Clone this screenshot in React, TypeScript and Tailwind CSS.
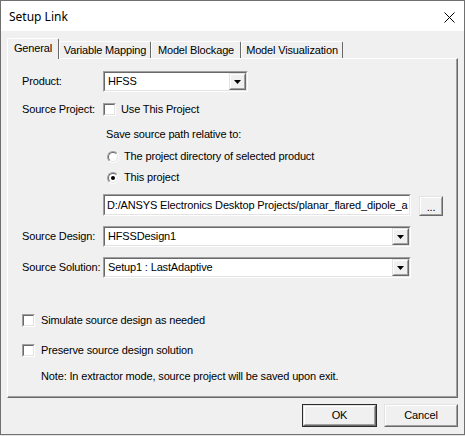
import React from "react";

// classic 3D bevels used by the Win32 controls
const sunkenOuter = "border border-t-[#a0a0a0] border-l-[#a0a0a0] border-b-white border-r-white";
const sunkenInner = "border border-t-[#696969] border-l-[#696969] border-b-[#e3e3e3] border-r-[#e3e3e3]";
const raisedOuter = "border border-t-[#e3e3e3] border-l-[#e3e3e3] border-b-[#696969] border-r-[#696969]";
const raisedInner = "border border-t-white border-l-white border-b-[#a0a0a0] border-r-[#a0a0a0]";

function Sunken({ className, children }: { className: string; children?: React.ReactNode }) {
  return (
    <div className={`${sunkenOuter} ${className}`}>
      <div className={`${sunkenInner} h-full w-full bg-white flex items-center overflow-hidden`}>{children}</div>
    </div>
  );
}

function DropButton() {
  return (
    <div className={`${raisedOuter} h-full w-[17px] shrink-0 bg-[#f0f0f0]`}>
      <div className={`${raisedInner} h-full w-full flex items-center justify-center`}>
        <svg width="7" height="4" viewBox="0 0 7 4">
          <polygon points="0,0 7,0 3.5,4" fill="#000" />
        </svg>
      </div>
    </div>
  );
}

function Combo({ value, width }: { value: string; width: string }) {
  return (
    <Sunken className={`${width} h-[21px]`}>
      <span className="flex-1 pl-[3px] whitespace-nowrap">{value}</span>
      <DropButton />
    </Sunken>
  );
}

function CheckBox() {
  return <Sunken className="w-[13px] h-[13px] shrink-0" />;
}

function Radio({ checked }: { checked?: boolean }) {
  return (
    <div className="w-[12px] h-[12px] shrink-0 rounded-full border border-t-[#a0a0a0] border-l-[#a0a0a0] border-b-white border-r-white">
      <div className="w-full h-full rounded-full border border-t-[#696969] border-l-[#696969] border-b-[#e3e3e3] border-r-[#e3e3e3] bg-white flex items-center justify-center">
        {checked && <div className="w-[4px] h-[4px] rounded-full bg-black" />}
      </div>
    </div>
  );
}

function Button({ label, primary }: { label: string; primary?: boolean }) {
  const face = (
    <div className={`${raisedOuter} h-full w-full bg-[#f0f0f0]`}>
      <div className={`${raisedInner} h-full w-full flex items-center justify-center`}>{label}</div>
    </div>
  );
  if (primary) return <div className="w-[75px] h-[23px] border border-[#2b2b2b]">{face}</div>;
  return <div className="w-[74px] h-[23px]">{face}</div>;
}

function Tab({ label, width, active }: { label: string; width: string; active?: boolean }) {
  if (active)
    return (
      <div className={`${width} h-[21px] -mb-[1px] relative z-10 bg-[#f0f0f0] rounded-tl-[2px] rounded-tr-[2px] border-t border-l border-r border-t-white border-l-white border-r-[#696969] flex items-center justify-center pb-[1px]`}>
        {label}
      </div>
    );
  return (
    <div className={`${width} h-[17px] bg-[#f0f0f0] rounded-tl-[2px] rounded-tr-[2px] border-t border-l border-r border-t-white border-l-white border-r-[#696969] flex items-center justify-center`}>
      {label}
    </div>
  );
}

export default function App() {
  return (
    <div className="w-[465px] h-[436px] bg-[#e4e4e4] font-['Liberation_Sans',Arial,sans-serif] text-[11px] tracking-[-0.15px] text-black leading-[13px]">
      <div className="w-[465px] h-[435px] border border-[#707070] bg-[#f0f0f0] flex flex-col">
        {/* title bar */}
        <div className="h-[30px] bg-white flex items-center justify-between pl-[8px] pr-[9px]">
          <span className="font-['Noto_Sans',sans-serif] text-[12px] tracking-normal leading-[16px] pt-[1px]">Setup Link</span>
          <svg width="11" height="11" viewBox="0 0 11 11" className="mt-[2px]">
            <path d="M0.5 0.5 L10.5 10.5 M10.5 0.5 L0.5 10.5" stroke="#000" strokeWidth="1" />
          </svg>
        </div>

        <div className="px-[6px]">
          {/* tab strip */}
          <div className="mt-[7px] h-[20px] flex items-end relative z-10">
            <Tab label="General" width="w-[52px]" active />
            <Tab label="Variable Mapping" width="w-[92px]" />
            <Tab label="Model Blockage" width="w-[90px]" />
            <Tab label="Model Visualization" width="w-[102px]" />
          </div>

          {/* tab page */}
          <div className="h-[340px] border-t border-l border-b border-r border-t-white border-l-white border-b-[#696969] border-r-[#696969]">
            <div className="h-full border-b border-r border-b-[#a0a0a0] border-r-[#a0a0a0] pl-[14px] flex flex-col">
              <div className="mt-[12px] h-[21px] flex items-center">
                <span className="w-[81px]">Product:</span>
                <Combo value="HFSS" width="w-[145px]" />
              </div>

              <div className="mt-[11px] h-[13px] flex items-center">
                <span className="w-[81px]">Source Project:</span>
                <CheckBox />
                <span className="ml-[5px]">Use This Project</span>
              </div>

              <div className="mt-[12px] h-[13px] flex items-center pl-[84px]">Save source path relative to:</div>

              <div className="mt-[9px] h-[13px] flex items-center pl-[85px]">
                <Radio />
                <span className="ml-[5px]">The project directory of selected product</span>
              </div>

              <div className="mt-[8px] h-[13px] flex items-center pl-[85px]">
                <Radio checked />
                <span className="ml-[5px]">This project</span>
              </div>

              <div className="mt-[10px] h-[22px] flex items-center">
                <span className="w-[81px]" />
                <Sunken className="w-[308px] h-[22px]">
                  <span className="pl-[2px] whitespace-nowrap">D:/ANSYS Electronics Desktop Projects/planar_flared_dipole_a</span>
                </Sunken>
                <div className="ml-[8px] w-[24px] h-[20px] mt-[1px]">
                  <div className={`${raisedOuter} h-full w-full`}>
                    <div className={`${raisedInner} h-full w-full flex items-end justify-center pb-[3px] leading-[8px]`}>...</div>
                  </div>
                </div>
              </div>

              <div className="mt-[10px] h-[21px] flex items-center">
                <span className="w-[81px]">Source Design:</span>
                <Combo value="HFSSDesign1" width="w-[308px]" />
              </div>

              <div className="mt-[10px] h-[21px] flex items-center">
                <span className="w-[81px]">Source Solution:</span>
                <Combo value="Setup1 : LastAdaptive" width="w-[308px]" />
              </div>

              <div className="mt-[36px] h-[13px] flex items-center">
                <CheckBox />
                <span className="ml-[6px]">Simulate source design as needed</span>
              </div>

              <div className="mt-[17px] h-[13px] flex items-center">
                <CheckBox />
                <span className="ml-[6px]">Preserve source design solution</span>
              </div>

              <div className="mt-[13px] h-[13px] flex items-center pl-[19px]">
                Note: In extractor mode, source project will be saved upon exit.
              </div>
            </div>
          </div>

          {/* dialog buttons */}
          <div className="mt-[6px] flex justify-end gap-[7px]">
            <Button label="OK" primary />
            <Button label="Cancel" />
          </div>
        </div>
      </div>
    </div>
  );
}
